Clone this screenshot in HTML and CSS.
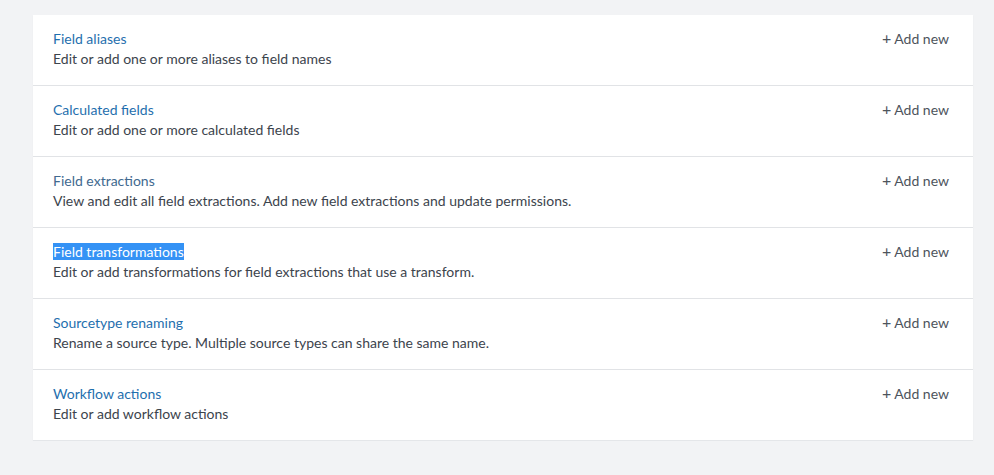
FILE: index.html
```html
<!DOCTYPE html>
<html lang="en">
<head>
  <meta charset="UTF-8">
  <title>Fields</title>
  <link rel="stylesheet" href="styles.css">
</head>
<body>
  <div class="panel">
    <div class="row">
      <div class="info">
        <a class="title" href="#">Field aliases</a>
        <p class="desc">Edit or add one or more aliases to field names</p>
      </div>
      <a class="add" href="#"><span class="plus">+</span> Add new</a>
    </div>
    <div class="row">
      <div class="info">
        <a class="title" href="#">Calculated fields</a>
        <p class="desc">Edit or add one or more calculated fields</p>
      </div>
      <a class="add" href="#"><span class="plus">+</span> Add new</a>
    </div>
    <div class="row">
      <div class="info">
        <a class="title visited" href="#">Field extractions</a>
        <p class="desc">View and edit all field extractions. Add new field extractions and update permissions.</p>
      </div>
      <a class="add" href="#"><span class="plus">+</span> Add new</a>
    </div>
    <div class="row">
      <div class="info">
        <a class="title" href="#"><span class="selected">Field transformations</span></a>
        <p class="desc">Edit or add transformations for field extractions that use a transform.</p>
      </div>
      <a class="add" href="#"><span class="plus">+</span> Add new</a>
    </div>
    <div class="row">
      <div class="info">
        <a class="title" href="#">Sourcetype renaming</a>
        <p class="desc">Rename a source type. Multiple source types can share the same name.</p>
      </div>
      <a class="add" href="#"><span class="plus">+</span> Add new</a>
    </div>
    <div class="row">
      <div class="info">
        <a class="title" href="#">Workflow actions</a>
        <p class="desc">Edit or add workflow actions</p>
      </div>
      <a class="add" href="#"><span class="plus">+</span> Add new</a>
    </div>
  </div>
</body>
</html>
```

FILE: styles.css
```css
* {
  margin: 0;
  padding: 0;
  box-sizing: border-box;
}

body {
  background-color: #f2f3f5;
  font-family: 'Lato', 'Open Sans', sans-serif;
  font-size: 14px;
  color: #3c444d;
  padding: 15px 21px 0 33px;
}

.panel {
  background: #fff;
  box-shadow: 0 1px 1px rgba(0, 0, 0, 0.06);
}

.row {
  display: flex;
  justify-content: space-between;
  align-items: flex-start;
  height: 71px;
  padding: 14px 24px 0 20px;
  border-bottom: 1px solid #e1e3e6;
}

.row:last-child {
  border-bottom: 1px solid #e4e6e9;
}

.title {
  display: inline-block;
  color: #1f6fae;
  text-decoration: none;
  line-height: 20px;
}

.title.visited {
  color: #41698f;
}

.selected {
  background: #3492f5;
  color: #fff;
}

.desc {
  line-height: 20px;
}

.add {
  color: #4d545c;
  text-decoration: none;
  line-height: 20px;
  margin-top: -1px;
}

.plus {
  font-size: 16px;
}
```
